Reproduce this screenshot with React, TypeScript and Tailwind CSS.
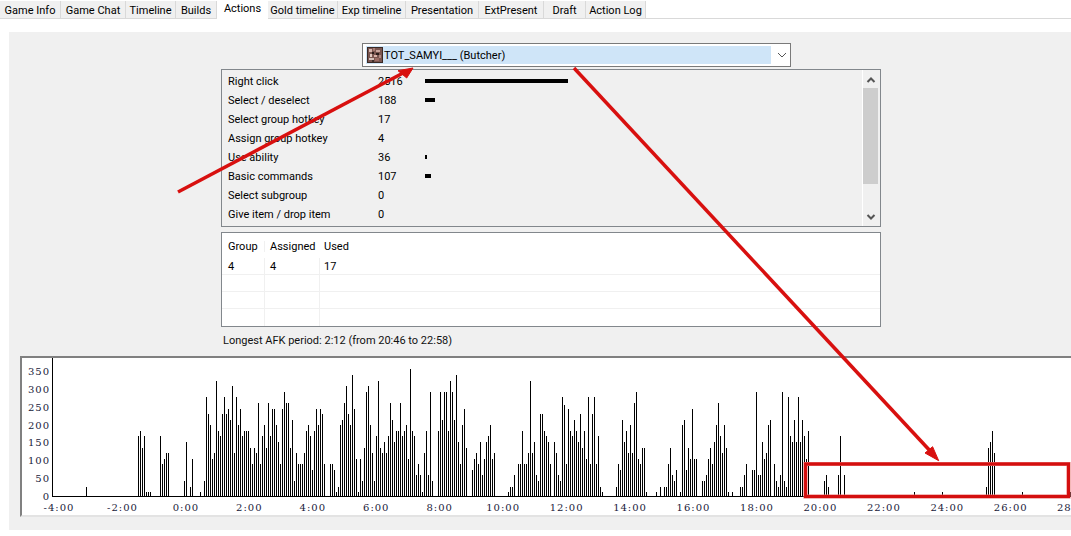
const tabs = [
  ['Game Info', 61],
  ['Game Chat', 65],
  ['Timeline', 50],
  ['Builds', 41],
  ['Actions', 51],
  ['Gold timeline', 70],
  ['Exp timeline', 68],
  ['Presentation', 73],
  ['ExtPresent', 65],
  ['Draft', 42],
  ['Action Log', 60],
] as const;

const actions: [string, string, number][] = [
  ['Right click', '2516', 143],
  ['Select / deselect', '188', 10],
  ['Select group hotkey', '17', 0],
  ['Assign group hotkey', '4', 0],
  ['Use ability', '36', 2],
  ['Basic commands', '107', 6],
  ['Select subgroup', '0', 0],
  ['Give item / drop item', '0', 0],
];

// bar heights by x pixel, read off the chart (pitch 2px)
const bars: Record<number, number[]> = {
  86: [9],
  138: [60, 65, 48, 60, 4, 4, 4],
  160: [60, 32, 37, 43, 43],
  184: [15, 54],
  190: [9, 37],
  200: [4],
  204: [15, 99, 82, 71, 37, 43, 115, 65, 60, 82, 99, 82, 87, 76, 110, 43, 99, 71, 87, 60, 65, 65, 65, 48, 32, 48, 43, 93, 32, 60, 71, 48, 93],
  270: [60, 87, 87, 71, 54, 32, 87, 104, 93, 93, 48, 76, 15, 43, 32, 32, 32, 43, 65, 71, 60, 26, 65, 87, 71, 87, 82, 32],
  330: [32, 32, 26, 4, 9, 71, 76, 93, 110, 82, 71, 121, 87, 37, 4, 37, 15, 48, 104, 110, 71, 43, 15, 60, 115, 48, 43, 54, 43, 60, 93, 76, 54, 65, 65, 93, 60, 65, 71, 37, 127, 65, 60, 21, 32, 21, 4, 43, 65, 21, 104, 15],
  438: [65, 104, 76, 104, 104, 65, 115, 104, 76, 121, 54, 32, 71, 87, 48],
  472: [26, 37, 43, 32, 54, 21, 37, 54, 60, 71, 37, 43],
  508: [4, 9, 9, 21],
  518: [32, 32, 65, 32, 32, 43, 115, 43, 54, 21, 15],
  540: [82, 82, 65, 60, 54, 32],
  554: [54, 43, 21, 15, 99, 91, 32, 87, 65, 60, 76, 65, 54, 82, 48, 65, 37, 99, 32, 82, 99, 32, 60, 9, 4],
  616: [9, 32, 26, 76, 54, 65, 43, 71, 43, 93, 104, 37, 32, 48, 48, 4],
  656: [4],
  660: [9],
  664: [9, 9, 32, 48, 21, 15, 26],
  680: [4, 71, 76, 26, 48, 37, 87, 37, 37],
  702: [15, 15, 21, 37, 48, 32, 54, 71, 93, 60, 43, 71, 48, 4],
  732: [4],
  740: [9, 9, 21, 32],
  752: [26, 26, 104, 21, 21, 54, 37, 43, 71, 76],
  774: [32, 15, 9, 21, 104, 15, 9, 99, 60, 54, 76, 54, 99, 54, 76, 60, 37, 65],
  824: [15, 21, 9],
  838: [21, 60],
  844: [21],
  914: [4],
  942: [4],
  986: [9, 48, 54, 65, 43],
  1022: [4],
  1070: [4],
};

const barList = Object.entries(bars).flatMap(([start, hs]) =>
  hs.map((h, i) => ({ x: Number(start) + i * 2, h }))
);

const yTicks = [0, 50, 100, 150, 200, 250, 300, 350];
const xTicks = ['-4:00', '-2:00', '0:00', '2:00', '4:00', '6:00', '8:00', '10:00', '12:00', '14:00', '16:00', '18:00', '20:00', '22:00', '24:00', '26:00'];

function Tabs() {
  return (
    <div className="flex h-[19px] items-start border-b border-[#d9d9d9]">
      {tabs.map(([label, width]) =>
        label === 'Actions' ? (
          <div key={label} style={{ width }} className="flex h-[19px] shrink-0 justify-center whitespace-nowrap bg-white pt-[3px] text-black">
            {label}
          </div>
        ) : (
          <div key={label} style={{ width }} className="mt-[1px] flex h-[17px] shrink-0 items-center justify-center whitespace-nowrap border-r border-[#d9d9d9] bg-[#f0f0f0] pt-[1px] text-black">
            {label}
          </div>
        )
      )}
    </div>
  );
}

function HeroIcon() {
  return (
    <svg width="16" height="16" viewBox="0 0 16 16" shapeRendering="crispEdges">
      <rect width="16" height="16" fill="#3a2a26" />
      <rect x="1" y="1" width="14" height="14" fill="#7a5650" />
      <rect x="2" y="2" width="3" height="3" fill="#d8b8b0" />
      <rect x="6" y="1" width="2" height="3" fill="#a87c74" />
      <rect x="9" y="3" width="4" height="2" fill="#c8a49c" />
      <rect x="5" y="5" width="2" height="2" fill="#2a1c1a" />
      <rect x="9" y="6" width="3" height="2" fill="#2a1c1a" />
      <rect x="3" y="7" width="2" height="3" fill="#e0c8c0" />
      <rect x="7" y="8" width="3" height="2" fill="#d8b0a8" />
      <rect x="12" y="8" width="2" height="3" fill="#b08a84" />
      <rect x="2" y="11" width="5" height="2" fill="#d4c0ba" />
      <rect x="8" y="11" width="4" height="3" fill="#9c6c64" />
      <rect x="5" y="13" width="2" height="2" fill="#40302c" />
    </svg>
  );
}

function Combo() {
  return (
    <div className="ml-[353px] flex h-[24px] w-[429px] items-center border border-[#7a7a7a] bg-white pl-[3px]">
      <div className="flex h-[18px] w-[405px] items-center bg-[#cfe5f8] pl-[1px]">
        <HeroIcon />
        <span className="ml-[1px]">TOT_SAMYI___ (Butcher)</span>
      </div>
      <svg width="10" height="6" viewBox="0 0 10 6" className="ml-[6px]" fill="none" stroke="#555" strokeWidth="1">
        <path d="M1 1 L5 5 L9 1" />
      </svg>
    </div>
  );
}

function ActionList() {
  return (
    <div className="ml-[212px] mt-[2px] flex h-[158px] w-[660px] border border-[#82878c] bg-[#f0f0f0]">
      <div className="flex-1 pt-[2px]">
        {actions.map(([name, count, bar]) => (
          <div key={name} className="flex h-[19px] items-center pl-[6px]">
            <span className="w-[150px]">{name}</span>
            <span className="w-[47px]">{count}</span>
            {bar > 0 && <span style={{ width: bar }} className="mb-[2px] h-[4px] bg-black" />}
          </div>
        ))}
      </div>
      <div className="flex w-[18px] flex-col items-center border-l border-white pr-[2px]">
        <svg width="10" height="18" viewBox="0 0 10 18" fill="none" stroke="#555" strokeWidth="2">
          <path d="M1.5 12 L5 8.5 L8.5 12" />
        </svg>
        <div className="h-[96px] w-[15px] bg-[#cdcdcd]" />
        <svg width="10" height="18" viewBox="0 0 10 18" className="mt-[23px]" fill="none" stroke="#555" strokeWidth="2">
          <path d="M1.5 8 L5 11.5 L8.5 8" />
        </svg>
      </div>
    </div>
  );
}

function GroupTable() {
  return (
    <div className="ml-[212px] mt-[5px] h-[95px] w-[660px] border border-[#82878c] bg-white">
      <div className="flex h-[25px] items-center pt-[2px]">
        <span className="w-[42px] pl-[6px]">Group</span>
        <span className="w-[55px] border-l border-[#f0f0f0] pl-[5px]">Assigned</span>
        <span className="pl-[5px]">Used</span>
      </div>
      {['17', '', '', ''].map((used, i) => (
        <div key={i} className={`flex h-[17px] items-center border-b border-[#f0f0f0] ${i === 3 ? 'border-b-0' : ''}`}>
          <span className="flex h-full w-[43px] items-center border-r border-[#f0f0f0] pl-[6px]">{used && '4'}</span>
          <span className="flex h-full w-[55px] items-center border-r border-[#f0f0f0] pl-[5px]">{used && '4'}</span>
          <span className="pl-[4px]">{used}</span>
        </div>
      ))}
    </div>
  );
}

function Chart() {
  return (
    <div className="ml-[11px] mt-[11px] h-[161px] border-t-2 border-l-2 border-b-2 border-t-[#808080] border-l-[#808080] border-b-[#e3e3e3] bg-white">
      <svg width="1049" height="157" viewBox="22 358 1049 157" className="block" fontFamily="'DejaVu Serif', serif" fontSize="10" letterSpacing="1" fill="#1a1a3a">
        <rect x="52" y="358" width="1" height="139" fill="#000" />
        <rect x="52" y="496" width="1019" height="1" fill="#000" />
        {barList.map(b => (
          <rect key={b.x} x={b.x} y={496 - b.h} width="1" height={b.h} fill="#000" shapeRendering="crispEdges" />
        ))}
        {yTicks.map((v, i) => (
          <text key={v} x="50" y={500 - i * 17.85} textAnchor="end">{v}</text>
        ))}
        {xTicks.map((t, i) => (
          <text key={t} x={59 + i * 63.45} y="511" textAnchor="middle">{t}</text>
        ))}
        <text x="1057" y="511">28</text>
      </svg>
    </div>
  );
}

function Annotations() {
  return (
    <svg width="1071" height="536" className="absolute left-0 top-0" fill="none">
      <path d="M178 192 L405 72" stroke="#d8100f" strokeWidth="3.5" />
      <path d="M413 68 L398 70.7 L406.7 78 Z" fill="#d8100f" stroke="#d8100f" />
      <path d="M574 68 L933 454" stroke="#d8100f" strokeWidth="3.5" />
      <path d="M938.7 460.7 L932.6 446.7 L925 453 Z" fill="#d8100f" stroke="#d8100f" />
      <rect x="805.5" y="464" width="263" height="32.5" stroke="#e8706f" strokeWidth="4" />
      <rect x="805.5" y="464" width="263" height="32.5" stroke="#d40f0f" strokeWidth="3" />
    </svg>
  );
}

export default function App() {
  return (
    <div className="relative h-[536px] w-[1071px] overflow-hidden bg-white font-['Roboto',sans-serif] text-[11px] leading-none text-black">
      <Tabs />
      <div className="ml-[9px] mt-[13px] h-[498px] bg-[#f0f0f0] pt-[11px]">
        <Combo />
        <ActionList />
        <GroupTable />
        <div className="ml-[214px] mt-[8px] h-[10px] text-[#111]">Longest AFK period: 2:12 (from 20:46 to 22:58)</div>
        <Chart />
      </div>
      <Annotations />
    </div>
  );
}
